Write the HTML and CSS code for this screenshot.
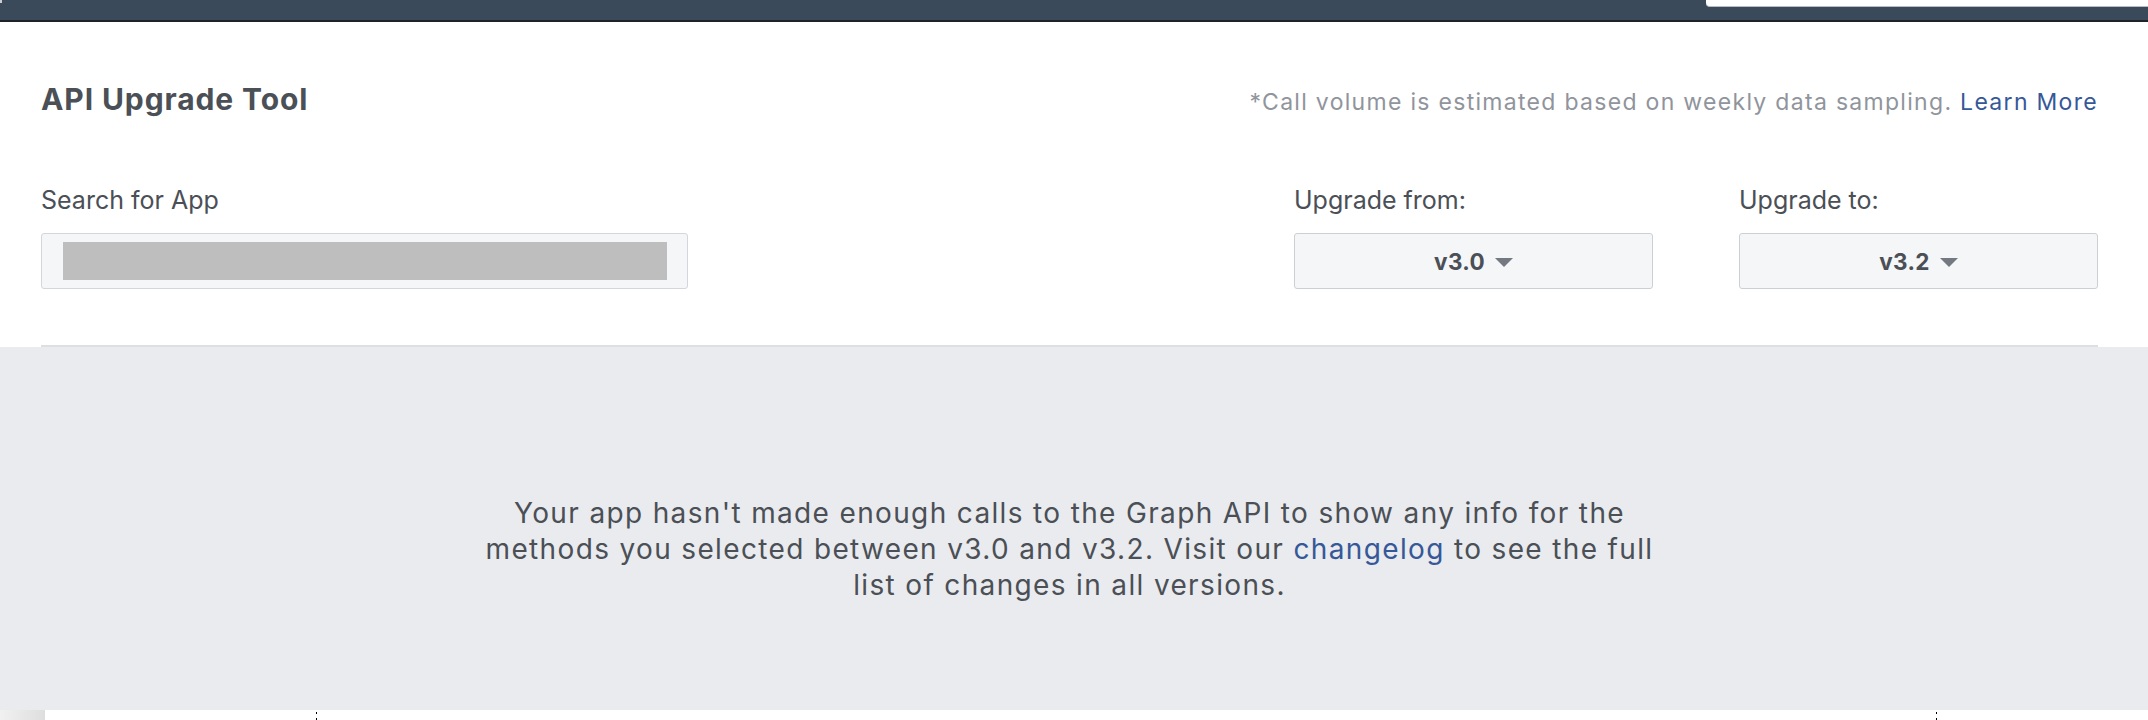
FILE: index.html
```html
<!DOCTYPE html>
<html lang="en">
<head>
<meta charset="utf-8">
<title>API Upgrade Tool</title>
<link rel="stylesheet" href="styles.css">
</head>
<body>
<div class="topbar">
  <span class="top-mark"></span>
  <div class="top-search"></div>
</div>

<section class="tool">
  <div class="tool-inner">
    <div class="head-row">
      <h1 class="title">API Upgrade Tool</h1>
      <p class="note">*Call volume is estimated based on weekly data sampling. <a class="link" href="#">Learn More</a></p>
    </div>
    <div class="form-row">
      <div class="field field-search">
        <label class="label">Search for App</label>
        <div class="search-box"><span class="redacted"></span></div>
      </div>
      <div class="selects">
        <div class="field field-select">
          <label class="label">Upgrade from:</label>
          <button class="select" type="button"><span class="select-text">v3.0</span><span class="caret"></span></button>
        </div>
        <div class="field field-select">
          <label class="label">Upgrade to:</label>
          <button class="select" type="button"><span class="select-text">v3.2</span><span class="caret"></span></button>
        </div>
      </div>
    </div>
  </div>
</section>

<section class="empty">
  <p class="empty-text">Your app hasn't made enough calls to the Graph API to show any info for the methods you selected between v3.0 and v3.2. Visit our <a class="link" href="#">changelog</a> to see the full list of changes in all versions.</p>
</section>

<div class="footer">
  <div class="footer-edge"></div>
  <div class="footer-card">
    <div class="footer-col"></div>
    <div class="footer-rule"></div>
    <div class="footer-col"></div>
    <div class="footer-rule"></div>
    <div class="footer-col"></div>
  </div>
</div>
</body>
</html>
```

FILE: styles.css
```css
html, body {
  margin: 0;
  padding: 0;
}
body {
  background: #ffffff;
  font-family: Inter, "Liberation Sans", Arial, sans-serif;
  color: #4b4f56;
  overflow: hidden;
  height: 720px;
}

/* top bar */
.topbar {
  height: 20px;
  background: #3b4a5b;
  border-bottom: 2px solid #1e2229;
  display: flex;
  justify-content: space-between;
  align-items: flex-start;
}
.top-mark {
  width: 2px;
  height: 3px;
  background: #c9ced6;
}
.top-search {
  width: 442px;
  height: 6px;
  background: #ffffff;
  border-bottom: 1px solid #b9bcc1;
  border-bottom-left-radius: 4px;
}

/* tool header */
.tool {
  padding: 0 50px 0 41px;
}
.tool-inner {
  padding-top: 58px;
  padding-bottom: 56px;
  border-bottom: 2px solid #dddfe2;
}
.head-row {
  display: flex;
  justify-content: space-between;
  align-items: baseline;
  height: 38px;
}
.title {
  margin: 0;
  font-size: 30px;
  line-height: 38px;
  font-weight: 700;
  letter-spacing: 0.9px;
  color: #4b4f56;
}
.note {
  margin: 0;
  font-size: 23px;
  line-height: 30px;
  letter-spacing: 1.3px;
  color: #90949c;
}
.link {
  color: #365899;
  text-decoration: none;
}

.form-row {
  margin-top: 66px;
  display: flex;
  justify-content: space-between;
}
.field {
  display: flex;
  flex-direction: column;
}
.label {
  font-size: 25px;
  line-height: 32px;
  color: #4b4f56;
  margin-bottom: 17px;
}
.field-search {
  width: 647px;
}
.search-box {
  box-sizing: border-box;
  height: 56px;
  border: 1px solid #d3d6db;
  border-radius: 3px;
  background: #f5f6f7;
  padding: 8px 20px 8px 21px;
  display: flex;
}
.redacted {
  flex: 1;
  background: #bebebe;
}

.selects {
  display: flex;
  gap: 86px;
}
.field-select {
  width: 359px;
}
.select {
  box-sizing: border-box;
  height: 56px;
  width: 100%;
  border: 1px solid #ccd0d5;
  border-radius: 3px;
  background: #f5f6f7;
  display: flex;
  align-items: center;
  justify-content: center;
  gap: 10px;
  padding: 0;
  font-family: inherit;
  cursor: pointer;
}
.select-text {
  font-size: 22.5px;
  font-weight: 700;
  letter-spacing: 0.3px;
  color: #4b4f56;
}
.caret {
  width: 0;
  height: 0;
  border-left: 9px solid transparent;
  border-right: 9px solid transparent;
  border-top: 9px solid #737881;
  margin-top: 2px;
}

/* empty state */
.empty {
  background: #e9ebee;
  height: 363px;
  box-sizing: border-box;
  padding: 148px 50px 0 41px;
}
.empty-text {
  margin: 0 auto;
  max-width: 1190px;
  text-align: center;
  font-size: 28px;
  line-height: 36px;
  letter-spacing: 1.35px;
  color: #4b4f56;
}

/* footer strip */
.footer {
  display: flex;
  height: 10px;
}
.footer-edge {
  width: 45px;
  background: linear-gradient(to right, #f1f1f1, #dedede);
}
.footer-card {
  flex: 1;
  background: #ffffff;
  display: grid;
  grid-template-columns: 271px 1px 1619px 1px 1fr;
}
.footer-rule {
  background: repeating-linear-gradient(to bottom, transparent 0 2px, #000000 2px 4px, transparent 4px 6px);
}
```
